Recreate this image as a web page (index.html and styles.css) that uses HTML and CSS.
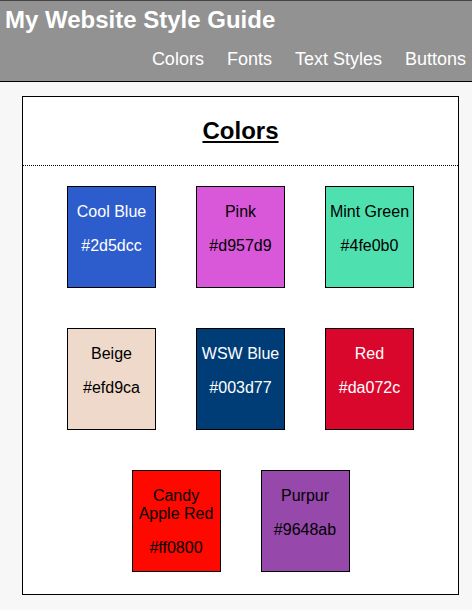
FILE: index.html
```html
<!DOCTYPE html>
<html lang="en">
<head>
    <meta charset="UTF-8">
    <meta name="viewport" content="width=device-width, initial-scale=1.0">
    <title>My Website Style Guide</title>
    <link rel="stylesheet" href="styles.css">
</head>
<body>
    <header class="header">
        <h1>My Website Style Guide</h1>
        <nav class="nav">
            <a href="#colors">Colors</a>
            <a href="#fonts">Fonts</a>
            <a href="#text-styles">Text Styles</a>
            <a href="#buttons">Buttons</a>
        </nav>
    </header>

    <section class="section" id="colors">
        <div class="section-header">
            <h2>Colors</h2>
        </div>
        <div class="swatches">
            <div class="swatch light" style="background-color: #2d5dcc;">
                <p>Cool Blue</p>
                <p>#2d5dcc</p>
            </div>
            <div class="swatch" style="background-color: #d957d9;">
                <p>Pink</p>
                <p>#d957d9</p>
            </div>
            <div class="swatch" style="background-color: #4fe0b0;">
                <p>Mint Green</p>
                <p>#4fe0b0</p>
            </div>
            <div class="swatch" style="background-color: #efd9ca;">
                <p>Beige</p>
                <p>#efd9ca</p>
            </div>
            <div class="swatch light" style="background-color: #003d77;">
                <p>WSW Blue</p>
                <p>#003d77</p>
            </div>
            <div class="swatch light" style="background-color: #da072c;">
                <p>Red</p>
                <p>#da072c</p>
            </div>
            <div class="swatch" style="background-color: #ff0800;">
                <p>Candy Apple Red</p>
                <p>#ff0800</p>
            </div>
            <div class="swatch" style="background-color: #9648ab;">
                <p>Purpur</p>
                <p>#9648ab</p>
            </div>
        </div>
    </section>
</body>
</html>
```

FILE: styles.css
```css
body {
    font-family: "Liberation Sans", Arial, sans-serif;
    background-color: #f7f7f7;
    margin: 0;
    overflow: hidden;
}
.header {
    background-color: #929292;
    border-top: 1px solid #444;
    border-bottom: 1px solid #000;
    padding: 5px 0 11px;
    color: white;
}
.header h1 {
    font-size: 24px;
    margin: 0 0 15px;
    padding-left: 5px;
    white-space: nowrap;
}
.nav {
    display: flex;
    justify-content: flex-end;
    gap: 23px;
    padding-right: 6px;
    font-size: 18px;
}
.nav a {
    color: white;
    text-decoration: none;
    white-space: nowrap;
}
.section {
    background-color: white;
    border: 1px solid #000;
    margin: 14px 13px 15px 22px;
}
.section-header {
    border-bottom: 1px dotted #000;
    text-align: center;
}
.section-header h2 {
    font-size: 24px;
    margin: 20px 0;
    text-decoration: underline;
}
.swatches {
    display: flex;
    flex-wrap: wrap;
    justify-content: center;
    padding-bottom: 2px;
}
.swatch {
    width: 87px;
    height: 100px;
    margin: 20px;
    border: 1px solid #000;
    text-align: center;
    font-size: 16px;
    color: #000;
}
.swatch.light {
    color: white;
}
.swatch p {
    margin: 16px 0;
}
```
